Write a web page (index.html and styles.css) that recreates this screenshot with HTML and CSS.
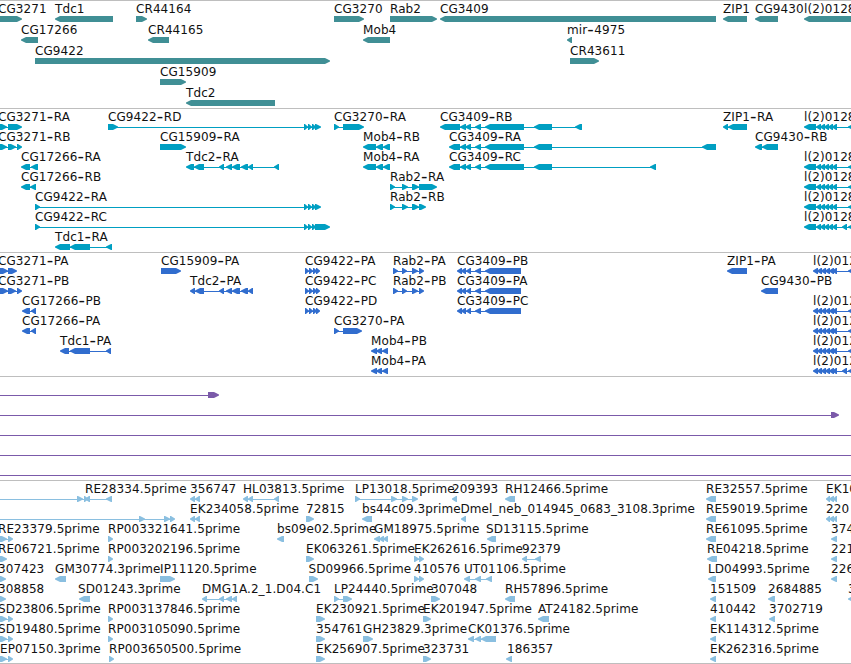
FILE: index.html
```html
<!DOCTYPE html>
<html lang="en">
<head>
    <meta charset="UTF-8">
    <meta name="viewport" content="width=device-width, initial-scale=1.0">
    <title>Genome Browser</title>
    <link rel="stylesheet" href="styles.css">
</head>
<body>
    <div class="browser">
        <svg class="track genes" id="genes"></svg>
        <svg class="track transcripts" id="transcripts"></svg>
        <svg class="track proteins" id="proteins"></svg>
        <svg class="track insertions" id="insertions"></svg>
        <svg class="track ests" id="ests"></svg>
    </div>
    <script src="tracks.js"></script>
</body>
</html>
```

FILE: styles.css
```css
body {
    margin: 0;
    background: #fff;
    overflow: hidden;
}

.browser {
    display: flex;
    flex-direction: column;
    width: 851px;
    height: 663px;
    border-bottom: 1px solid #bebebe;
}

.track {
    display: block;
    box-sizing: border-box;
    flex: none;
    width: 851px;
    border-top: 1px solid #bebebe;
    overflow: hidden;
}

.label {
    font-family: "DejaVu Sans", sans-serif;
    font-size: 12px;
    letter-spacing: 0.09px;
    fill: #111;
}

.hyphen {
    font-size: 18px;
    letter-spacing: 0.5px;
}

.genes {
    height: 108px;
    fill: #408f95;
}

.transcripts {
    height: 144px;
    fill: #009fc2;
}

.proteins {
    height: 124px;
    fill: #316dce;
}

.insertions {
    height: 104px;
    fill: #7b5aa9;
}

.ests {
    height: 183px;
    fill: #8abfe0;
}
```

FILE: tracks.js
```js
const NS = 'http://www.w3.org/2000/svg';

// exon groups shared by several features
const CG9422 = [[304, 308], [308, 312], [312, 316]];
const CG3409 = [[460, 466], [465, 471], [475, 481], [485, 524], [534, 552]];
const L2 = [[804, 816], [816, 821], [820, 825], [824, 829], [828, 833], [832, 837]];
const L2P = [[813, 818], [817, 822], [821, 826], [825, 830], [829, 834], [832, 837]];
const CG9422P = [[305, 309], [309, 313], [313, 317], [316, 320]];
const CG3409P = [[457, 462], [461, 466], [466, 471], [475, 481], [485, 521]];
const RAB2P = [[393, 398], [402, 407], [412, 418], [419, 424]];
const TDC2P = [[190, 195], [195, 204], [219, 224], [226, 232], [232, 240], [241, 248], [248, 253]];
const MOB4 = [[363, 376], [376, 383], [383, 390]];
const MOB4P = [[371, 377], [376, 382], [382, 388]];

// every feature: row, label, label x, strand, blocks
const genes = [
    [0, 'CG3271', -2, '>', [[-6, 22]]],
    [0, 'Tdc1', 55, '<', [[55, 113]]],
    [0, 'CR44164', 136, '>', [[136, 147]]],
    [0, 'CG3270', 334, '>', [[334, 364]]],
    [0, 'Rab2', 390, '>', [[390, 437]]],
    [0, 'CG3409', 440, '<', [[440, 716]]],
    [0, 'ZIP1', 723, '<', [[723, 747]]],
    [0, 'CG9430', 755, '<', [[755, 778]]],
    [0, 'l(2)0128', 804, '<', [[804, 870]]],
    [1, 'CG17266', 21, '<', [[21, 38]]],
    [1, 'CR44165', 148, '<', [[148, 169]]],
    [1, 'Mob4', 363, '<', [[363, 390]]],
    [1, 'mir-4975', 567, '<', [[567, 572]]],
    [2, 'CG9422', 35, '>', [[35, 330]]],
    [2, 'CR43611', 570, '>', [[570, 599]]],
    [3, 'CG15909', 160, '>', [[160, 186]]],
    [4, 'Tdc2', 186, '<', [[186, 275]]]
];

const transcripts = [
    [0, 'CG3271-RA', -2, '>', [[-2, 7], [8, 22]]],
    [0, 'CG9422-RD', 108, '>', [[108, 118], ...CG9422, [315, 321]]],
    [0, 'CG3270-RA', 334, '>', [[334, 339], [343, 364]]],
    [0, 'CG3409-RB', 440, '<', [[440, 460], ...CG3409, [575, 582]]],
    [0, 'ZIP1-RA', 723, '<', [[723, 728], [728, 747]]],
    [0, 'l(2)0128', 804, '<', [...L2, [848, 856]]],
    [1, 'CG3271-RB', -2, '>', [[-2, 7], [8, 16], [17, 22]]],
    [1, 'CG15909-RA', 160, '>', [[160, 186]]],
    [1, 'Mob4-RB', 363, '<', MOB4],
    [1, 'CG3409-RA', 449, '<', [[449, 460], ...CG3409, [702, 716]]],
    [1, 'CG9430-RB', 755, '<', [[755, 762], [762, 778]]],
    [2, 'CG17266-RA', 21, '<', [[21, 30], [31, 38]]],
    [2, 'Tdc2-RA', 186, '<', [[186, 194], [194, 204], [219, 224], [226, 232], [232, 240], [241, 248], [248, 253], [274, 279]]],
    [2, 'Mob4-RA', 363, '<', MOB4],
    [2, 'CG3409-RC', 449, '<', [[449, 460], ...CG3409, [650, 656]]],
    [2, 'l(2)0128', 804, '<', [...L2, [848, 856]]],
    [3, 'CG17266-RB', 21, '<', [[21, 30], [30, 36]]],
    [3, 'Rab2-RA', 390, '>', [[390, 395], [402, 408], [412, 419], [419, 437]]],
    [3, 'l(2)0128', 804, '<', [...L2, [848, 856]]],
    [4, 'CG9422-RA', 35, '>', [[35, 40], ...CG9422, [315, 321]]],
    [4, 'Rab2-RB', 390, '>', [[390, 395], [402, 408], [412, 419], [419, 426]]],
    [4, 'l(2)0128', 804, '<', [...L2, [848, 856]]],
    [5, 'CG9422-RC', 35, '>', [[35, 40], ...CG9422, [315, 330]]],
    [5, 'l(2)0128', 804, '<', [...L2, [842, 847], [848, 856]]],
    [6, 'Tdc1-RA', 55, '<', [[55, 70], [70, 90], [106, 112]]]
];

const proteins = [
    [0, 'CG3271-PA', -2, '>', [[-2, 8], [8, 17]]],
    [0, 'CG15909-PA', 161, '>', [[161, 181]]],
    [0, 'CG9422-PA', 305, '>', CG9422P],
    [0, 'Rab2-PA', 393, '>', RAB2P],
    [0, 'CG3409-PB', 457, '<', CG3409P],
    [0, 'ZIP1-PA', 727, '<', [[727, 747]]],
    [0, 'l(2)012', 813, '<', [...L2P, [848, 856]]],
    [1, 'CG3271-PB', -2, '>', [[-2, 8], [8, 16], [17, 22]]],
    [1, 'Tdc2-PA', 190, '<', TDC2P],
    [1, 'CG9422-PC', 305, '>', CG9422P],
    [1, 'Rab2-PB', 393, '>', RAB2P],
    [1, 'CG3409-PA', 457, '<', CG3409P],
    [1, 'CG9430-PB', 761, '<', [[761, 778]]],
    [2, 'CG17266-PB', 22, '<', [[22, 30], [31, 36]]],
    [2, 'CG9422-PD', 305, '>', CG9422P],
    [2, 'CG3409-PC', 457, '<', CG3409P],
    [2, 'l(2)012', 813, '<', [...L2P, [848, 856]]],
    [3, 'CG17266-PA', 22, '<', [[22, 30], [31, 36]]],
    [3, 'CG3270-PA', 334, '>', [[334, 339], [343, 362]]],
    [3, 'l(2)012', 813, '<', [...L2P, [848, 856]]],
    [4, 'Tdc1-PA', 60, '<', [[60, 69], [70, 90], [106, 111]]],
    [4, 'Mob4-PB', 371, '<', MOB4P],
    [4, 'l(2)012', 813, '<', [...L2P, [848, 856]]],
    [5, 'Mob4-PA', 371, '<', MOB4P],
    [5, 'l(2)012', 813, '<', [...L2P, [842, 847], [848, 856]]]
];

const insertions = [
    [0, '', 0, '>', [[-20, -10], [208, 219]]],
    [1, '', 0, '>', [[-20, -10], [831, 839]]],
    [2, '', 0, '>', [[-20, -10], [870, 880]]],
    [3, '', 0, '>', [[-20, -10], [870, 880]]],
    [4, '', 0, '>', [[-20, -10], [870, 880]]]
];

const ests = [
    [0, '', 0, '>', [[-20, -10], [77, 83], [84, 88]]],
    [0, 'RE28334.5prime', 85, '<', [[85, 90], [106, 112]]],
    [0, '356747', 190, '<', [[190, 195], [195, 200]]],
    [0, 'HL03813.5prime', 243, '<', [[243, 248], [248, 253], [274, 279]]],
    [0, 'LP13018.5prime', 355, '>', [[355, 360], [391, 397], [402, 408], [412, 418]]],
    [0, '209393', 452, '<', [[452, 457]]],
    [0, 'RH12466.5prime', 505, '<', [[505, 515]]],
    [0, 'RE32557.5prime', 706, '<', [[706, 716]]],
    [0, 'EK10', 826, '<', [[826, 830], [829, 834], [833, 837]]],
    [1, '', 0, '>', [[-20, -10], [139, 145], [164, 170], [170, 175]]],
    [1, 'EK234058.5prime', 190, '<', [[190, 195], [195, 200]]],
    [1, '72815', 306, '>', [[306, 314]]],
    [1, 'bs44c09.3prime', 362, '<', [[362, 372]]],
    [1, 'Dmel_neb_014945_0683_3108.3prime', 460.5, '<', [[461, 466]]],
    [1, 'RE59019.5prime', 706, '<', [[706, 716]]],
    [1, '220', 826, '<', [[826, 830], [829, 834], [833, 837]]],
    [2, 'RE23379.5prime', -2, '>', [[-2, 7], [8, 13]]],
    [2, 'RP003321641.5prime', 108, '>', [[108, 113]]],
    [2, 'bs09e02.5prime', 277, '<', [[277, 284]]],
    [2, 'GM18975.5prime', 374, '<', [[374, 380], [379, 384], [383, 388]]],
    [2, 'SD13115.5prime', 486, '<', [[487, 496]]],
    [2, 'RE61095.5prime', 706, '<', [[706, 716]]],
    [2, '374', 831, '<', [[831, 837]]],
    [3, 'RE06721.5prime', -2, '>', [[-2, 7]]],
    [3, 'RP003202196.5prime', 108, '>', [[108, 113]]],
    [3, 'EK063261.5prime', 306, '>', [[306, 314]]],
    [3, 'EK262616.5prime', 414, '>', [[414, 419], [419, 424]]],
    [3, '92379', 522, '<', [[522, 527], [535, 541]]],
    [3, 'RE04218.5prime', 707, '<', [[707, 717]]],
    [3, '221', 831, '<', [[831, 837]]],
    [4, '307423', -2, '>', [[-2, 6]]],
    [4, 'GM30774.3prime', 55, '<', [[55, 66]]],
    [4, 'IP11120.5prime', 160, '>', [[160, 175]]],
    [4, 'SD09966.5prime', 308.5, '>', [[309, 318]]],
    [4, '410576', 414, '>', [[414, 419], [419, 424]]],
    [4, 'UT01106.5prime', 464, '<', [[464, 470], [475, 481], [486, 492]]],
    [4, 'LD04993.5prime', 708, '<', [[708, 716]]],
    [4, '226', 831, '<', [[831, 837]]],
    [5, '308858', -2, '>', [[-2, 6]]],
    [5, 'SD01243.3prime', 78, '<', [[79, 90]]],
    [5, 'DMG1A.2_1.D04.C1', 202, '<', [[202, 207], [219, 224], [226, 232], [232, 237]]],
    [5, 'LP24440.5prime', 334, '>', [[334, 339], [343, 352]]],
    [5, '307048', 431, '>', [[431, 440]]],
    [5, 'RH57896.5prime', 505, '<', [[505, 515]]],
    [5, '151509', 710, '<', [[710, 716]]],
    [5, '2684885', 768, '<', [[768, 775]]],
    [5, '3', 848, '<', [[848, 856]]],
    [6, 'SD23806.5prime', -2, '>', [[-2, 7], [8, 13]]],
    [6, 'RP003137846.5prime', 108, '>', [[108, 113]]],
    [6, 'EK230921.5prime', 316, '>', [[316, 325]]],
    [6, 'EK201947.5prime', 423, '>', [[423, 431]]],
    [6, 'AT24182.5prime', 538, '<', [[538, 549]]],
    [6, '410442', 710, '<', [[710, 716]]],
    [6, '3702719', 769, '<', [[769, 775]]],
    [7, 'SD19480.5prime', -2, '>', [[-2, 7], [8, 13]]],
    [7, 'RP003105090.5prime', 108, '>', [[108, 113]]],
    [7, '354761', 316, '>', [[316, 325]]],
    [7, 'GH23829.3prime', 363, '>', [[363, 373]]],
    [7, 'CK01376.5prime', 468, '<', [[468, 474], [475, 481], [481, 496]]],
    [7, 'EK114312.5prime', 710, '<', [[710, 716]]],
    [8, 'EP07150.3prime', 0, '>', [[-2, 7], [8, 13]]],
    [8, 'RP003650500.5prime', 109, '>', [[109, 114]]],
    [8, 'EK256907.5prime', 316, '>', [[316, 325]]],
    [8, '323731', 423, '>', [[423, 431]]],
    [8, '186357', 507, '<', [[506, 512]]],
    [8, 'EK262316.5prime', 710, '<', [[710, 716]]]
];

function add(parent, tag, attrs) {
    const el = document.createElementNS(NS, tag);
    for (const key in attrs) {
        el.setAttribute(key, attrs[key]);
    }
    parent.appendChild(el);
    return el;
}

// 6px high block with a rounded point on the strand side
function block(start, end, y, strand) {
    const head = Math.min(6, end - start);
    const tip = strand === '>' ? end : start;
    const back = strand === '>' ? start : end;
    const d = strand === '>' ? -1 : 1;
    const neck = tip + d * (head - 1);
    const mid = tip + d * head * 0.5;
    return [[back, y], [neck, y], [mid, y + 1], [tip, y + 2.6],
        [tip, y + 3.6], [mid, y + 5], [neck, y + 6], [back, y + 6]].join(' ');
}

// the hyphen is drawn larger than the letters around it
function drawLabel(svg, label, x, y) {
    const text = add(svg, 'text', { class: 'label', x: x, y: y });
    const [name, suffix] = label.split('-');
    add(text, 'tspan', {}).textContent = name;
    if (suffix) {
        add(text, 'tspan', { class: 'hyphen', dy: 1 }).textContent = '-';
        add(text, 'tspan', { dy: -1 }).textContent = suffix;
    }
}

function drawTrack(id, features, rowHeight) {
    const svg = document.getElementById(id);
    features.forEach(([row, label, x, strand, blocks]) => {
        const y = row * rowHeight + 15;
        const left = blocks[0][0] + 1;
        const right = blocks[blocks.length - 1][1] - 1;
        add(svg, 'rect', { x: left, y: y + 3, width: right - left, height: 1 });
        blocks.forEach(([start, end]) => {
            add(svg, 'polygon', { points: block(start, end, y, strand) });
        });
    });
    // labels go last so that they stay above the glyphs
    features.forEach(([row, label, x]) => {
        if (label) {
            drawLabel(svg, label, x, row * rowHeight + 12);
        }
    });
}

drawTrack('genes', genes, 21);
drawTrack('transcripts', transcripts, 20);
drawTrack('proteins', proteins, 20);
drawTrack('insertions', insertions, 20);
drawTrack('ests', ests, 20);
```
